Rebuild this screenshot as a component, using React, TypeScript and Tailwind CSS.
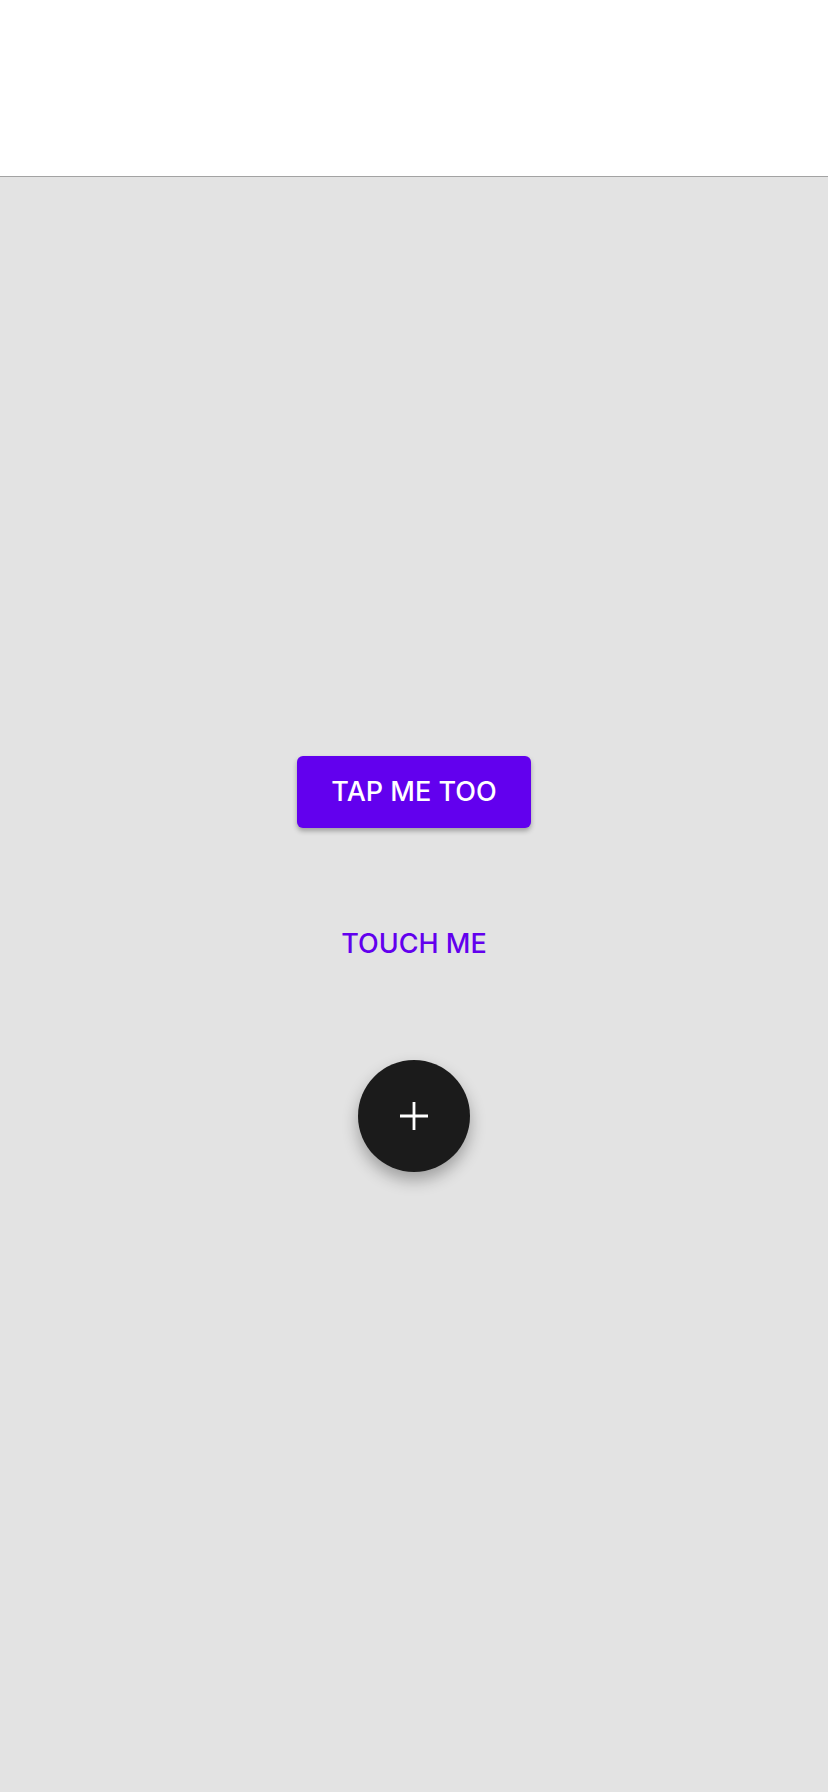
export default function App() {
  return (
    <div className="flex flex-col min-h-[1792px] bg-[#e3e3e3] font-['Inter',sans-serif]">
      <div className="h-[177px] bg-white border-b border-[#a3a3a3]" />
      <div className="flex flex-col items-center pt-[579px] gap-[80px]">
        <button className="h-[72px] w-[234px] rounded-[6px] bg-[#6200ee] text-white text-[27px] font-medium shadow-[0_3px_5px_rgba(0,0,0,0.3)]">
          TAP ME TOO
        </button>
        <button className="h-[72px] px-4 text-[#6200ee] text-[27px] font-medium">
          TOUCH ME
        </button>
        <button className="h-[112px] w-[112px] rounded-full bg-[#1b1b1b] flex items-center justify-center shadow-[0_8px_16px_rgba(0,0,0,0.3)]">
          <svg width="28" height="28" viewBox="0 0 28 28">
            <path d="M14 0v28M0 14h28" stroke="white" strokeWidth="2.8" />
          </svg>
        </button>
      </div>
    </div>
  )
}
